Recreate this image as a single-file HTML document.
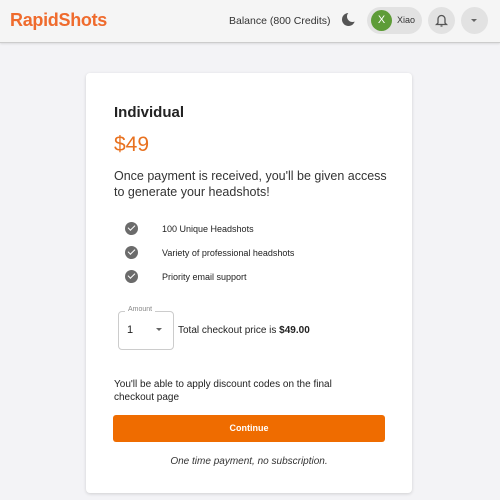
<!DOCTYPE html>
<html><head><style>
body{margin:0;width:500px;height:500px;background:#f3f3f6;font-family:"Liberation Sans",sans-serif;position:relative;overflow:hidden;color:#222}
.hdr{position:absolute;left:0;top:0;width:500px;height:42px;background:#f5f5f5;border-bottom:1px solid #ccc;box-shadow:0 1px 2px rgba(0,0,0,.1)}
.logo{position:absolute;left:10px;top:10px;font-size:18px;font-weight:bold;color:#ef6b2d;letter-spacing:-.3px}
.bal{position:absolute;left:229px;top:15px;font-size:10.5px;color:#333}
.card{position:absolute;left:86px;top:73px;width:326px;height:420px;background:#fff;border-radius:4px;box-shadow:0 1px 3px rgba(0,0,0,.15)}
.t{position:absolute;left:28px}
.chk{position:absolute;left:39px;width:13px;height:13px;border-radius:50%;background:#6b6b6b}
.chk:after{content:"";position:absolute;left:3px;top:3px;width:6px;height:3px;border-left:1.6px solid #fff;border-bottom:1.6px solid #fff;transform:rotate(-45deg)}
.f{position:absolute;left:76px;font-size:9px;color:#222}
</style></head><body>
<div class="hdr">
<div class="logo">RapidShots</div>
<div class="bal">Balance (800 Credits)</div>
<div style="position:absolute;left:342px;top:13px;width:13px;height:13px;border-radius:50%;background:#555"></div>
<div style="position:absolute;left:347px;top:11px;width:11px;height:11px;border-radius:50%;background:#f5f5f5"></div>
<div style="position:absolute;left:367px;top:7px;width:55px;height:27px;border-radius:14px;background:#e2e2e2"></div>
<div style="position:absolute;left:371px;top:10px;width:21px;height:21px;border-radius:50%;background:#5e9c38;color:#fff;font-size:11px;text-align:center;line-height:21px">X</div>
<div style="position:absolute;left:397px;top:15px;font-size:9px;color:#333">Xiao</div>
<div style="position:absolute;left:428px;top:7px;width:27px;height:27px;border-radius:50%;background:#e2e2e2"></div>
<svg style="position:absolute;left:435px;top:13px" width="13" height="15" viewBox="0 0 13 15"><path d="M3 10V6a3.5 3.5 0 0 1 7 0v4l1.5 1.5h-10Z M5.5 13h2" fill="none" stroke="#555" stroke-width="1.3"/></svg>
<div style="position:absolute;left:461px;top:7px;width:27px;height:27px;border-radius:50%;background:#e2e2e2"></div>
<div style="position:absolute;left:471px;top:19px;border:3px solid transparent;border-top:3px solid #666"></div>
</div>
<div class="card">
<div class="t" style="top:31px;font-size:15px;font-weight:bold">Individual</div>
<div class="t" style="top:60px;font-size:21px;color:#e8711f">$49</div>
<div class="t" style="top:95px;font-size:12.5px;line-height:16px;color:#333;width:275px">Once payment is received, you'll be given access to generate your headshots!</div>
<div class="chk" style="top:149px"></div><div class="f" style="top:151px">100 Unique Headshots</div>
<div class="chk" style="top:173px"></div><div class="f" style="top:175px">Variety of professional headshots</div>
<div class="chk" style="top:197px"></div><div class="f" style="top:199px">Priority email support</div>
<div style="position:absolute;left:32px;top:238px;width:54px;height:37px;border:1px solid #ccc;border-radius:4px"></div>
<div style="position:absolute;left:39px;top:233px;background:#fff;padding:0 3px;font-size:7px;color:#888">Amount</div>
<div style="position:absolute;left:41px;top:251px;font-size:11px">1</div>
<div style="position:absolute;left:70px;top:255px;border:3.5px solid transparent;border-top:3.5px solid #666"></div>
<div style="position:absolute;left:92px;top:252px;font-size:10px">Total checkout price is <b>$49.00</b></div>
<div class="t" style="top:305px;font-size:10px;line-height:13px;width:250px">You'll be able to apply discount codes on the final checkout page</div>
<div style="position:absolute;left:27px;top:342px;width:272px;height:27px;background:#ef6c00;border-radius:3px;color:#fff;font-size:9px;font-weight:bold;text-align:center;line-height:27px">Continue</div>
<div style="position:absolute;left:0;width:326px;top:383px;text-align:center;font-size:10px;font-style:italic;color:#333">One time payment, no subscription.</div>
</div>
</body></html>
